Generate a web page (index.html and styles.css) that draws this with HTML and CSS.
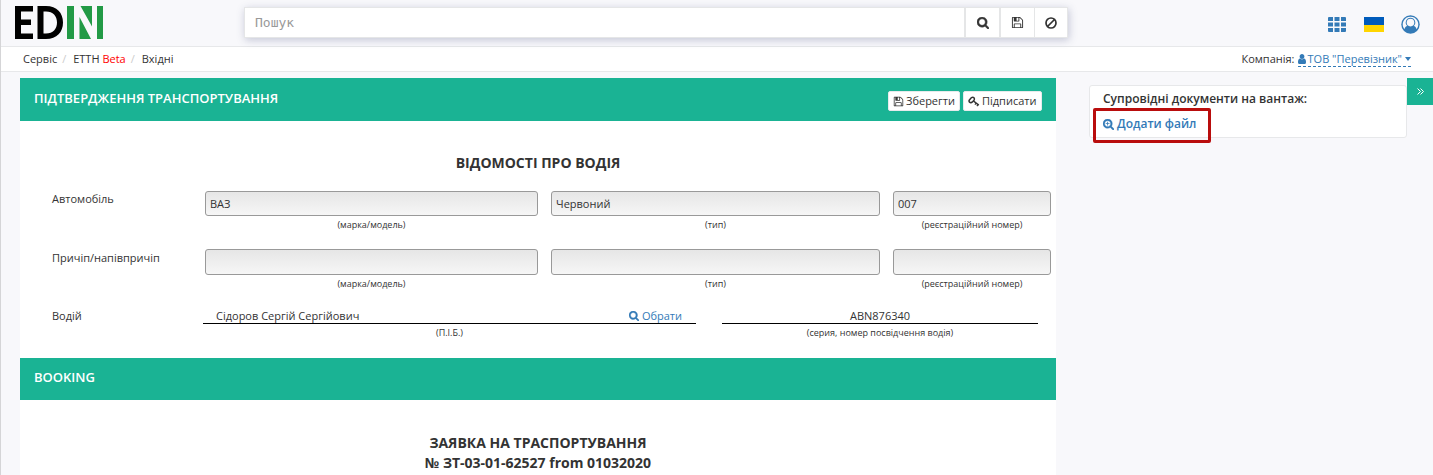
FILE: index.html
```html
<!DOCTYPE html>
<html lang="uk">
<head>
<meta charset="utf-8">
<title>EDIN</title>
<link rel="stylesheet" href="styles.css">
</head>
<body>
<svg class="defs" width="0" height="0" aria-hidden="true">
  <symbol id="search" viewBox="64 128 1664 1664"><path stroke="currentColor" stroke-width="70" d="M1216 832q0-185-131.5-316.5t-316.5-131.5-316.5 131.5-131.5 316.5 131.5 316.5 316.5 131.5 316.5-131.5 131.500-316.500zm512 832q0 52-38 90t-90 38q-54 0-90-38l-343-342q-179 124-399 124-143 0-273.500-55.500t-225-150-150-225-55.500-273.500 55.500-273.500 150-225 225-150 273.500-55.500 273.500 55.500 225 150 150 225 55.500 273.500q0 220-124 399l343 343q37 37 37 90z"/></symbol>
  <symbol id="zoom-in" viewBox="64 128 1664 1664"><path stroke="currentColor" stroke-width="50" d="M1216 832q0-185-131.5-316.5t-316.5-131.5-316.5 131.5-131.5 316.5 131.5 316.5 316.5 131.5 316.5-131.5 131.500-316.500zm512 832q0 52-38 90t-90 38q-54 0-90-38l-343-342q-179 124-399 124-143 0-273.500-55.500t-225-150-150-225-55.500-273.500 55.500-273.500 150-225 225-150 273.500-55.500 273.500 55.500 225 150 150 225 55.500 273.500q0 220-124 399l343 343q37 37 37 90z"/><path d="M704 544h128v224h224v128h-224v224h-128v-224h-224v-128h224z"/></symbol>
  <symbol id="save" viewBox="0 0 1792 1792"><path d="M512 1536h768v-384h-768v384zm896 0h128v-896q0-14-10-38.500t-20-34.500l-281-281q-10-10-34-20t-39-10v416q0 40-28 68t-68 28h-576q-40 0-68-28t-28-68v-416h-128v1280h128v-416q0-40 28-68t68-28h832q40 0 68 28t28 68v416zm-384-928v-320q0-13-9.500-22.500t-22.500-9.500h-192q-13 0-22.500 9.500t-9.500 22.500v320q0 13 9.500 22.500t22.500 9.500h192q13 0 22.500-9.500t9.500-22.500zm640 32v928q0 40-28 68t-68 28h-1344q-40 0-68-28t-28-68v-1344q0-40 28-68t68-28h928q40 0 88 20t76 48l280 280q28 28 48 76t20 88z"/></symbol>
  <symbol id="user" viewBox="0 0 1792 1792"><path d="M1536 1399q0 109-62.500 187t-150.500 78h-854q-88 0-150.500-78t-62.500-187q0-85 8.500-160.500t31.500-152 58.500-131 94-89 134.500-34.500q131 128 313 128t313-128q76 0 134.500 34.500t94 89 58.500 131 31.500 152 8.500 160.500zm-256-887q0 159-112.500 271.500t-271.500 112.500-271.500-112.500-112.500-271.500 112.500-271.500 271.500-112.500 271.500 112.500 112.500 271.500z"/></symbol>
</svg>

<header class="topbar">
  <svg class="logo" width="89" height="34" viewBox="0 0 89 34">
    <path d="M0 0H18V5.500H6V13.500H16V19H6V27.500H18V33H0Z"/>
    <path fill-rule="evenodd" d="M22.500 0H31C42 0 48 7 48 16.500S42 33 31 33H22.500ZM28.500 5.500V27.500H31C38 27.500 42 23 42 16.500S38 5.500 31 5.500Z"/>
    <path fill="#229a46" d="M52 0H59V33H52ZM65.500 0H77V20.500ZM64.500 11L76 33H64.500ZM82 0H88V33H82Z"/>
  </svg>
  <div class="searchbox">
    <div class="searchbox-input">Пошук</div>
    <div class="searchbox-btn"><svg width="12" height="12"><use href="#search"/></svg></div>
    <div class="searchbox-btn"><svg width="13" height="13"><use href="#save"/></svg></div>
    <div class="searchbox-btn last"><svg class="stroked" width="12" height="12" viewBox="0 0 12 12" stroke-width="1.700"><circle cx="6" cy="6" r="5"/><path d="M2.500 9.500L9.500 2.500"/></svg></div>
  </div>
  <nav class="tools">
    <svg width="19" height="15" viewBox="0 0 19 15"><path d="M0 1q0-1 1-1h4v4H0zM6.500 0h5v4h-5zM13 0h4q1 0 1 1v3h-5zM0 5.500h5v4H0zM6.500 5.500h5v4h-5zM13 5.500h5v4h-5zM0 11h5v4H1q-1 0-1-1zM6.500 11h5v4h-5zM13 11h5v3q0 1-1 1h-4z"/></svg>
    <span class="flag"></span>
    <svg width="19" height="19" viewBox="0 0 19 19"><circle cx="9.500" cy="9.500" r="9.200"/><path fill="#f8f8fb" d="M9.500 1.700A7.800 7.800 0 0 0 3.400 14.300C3.900 12.300 4.900 11.300 6.200 11.100A4.900 4.900 0 0 1 9.500 2.700A4.900 4.900 0 0 1 12.800 11.100C14.100 11.300 15.100 12.300 15.600 14.300A7.800 7.800 0 0 0 9.500 1.700Z"/><circle cx="9.500" cy="7.600" r="3.800" fill="#f8f8fb"/></svg>
  </nav>
</header>

<div class="crumbs">
  <div class="trail"><span>Сервіс</span><i>/</i><span>ЕТТН <b>Beta</b></span><i>/</i><span>Вхідні</span></div>
  <div class="company">Компанія: <a class="company-link"><svg width="8" height="10" viewBox="256 128 1280 1536" preserveAspectRatio="none"><use href="#user" width="1792" height="1792"/></svg><span>ТОВ "Перевізник"</span><em class="caret"></em></a></div>
</div>

<main class="page">
  <section class="panel">
    <div class="panel-head">
      <h2>ПІДТВЕРДЖЕННЯ ТРАНСПОРТУВАННЯ</h2>
      <div class="actions">
        <button class="btn save"><svg width="11" height="11"><use href="#save"/></svg>Зберегти</button>
        <button class="btn sign"><svg class="stroked" width="12" height="11" viewBox="0 0 12 11"><path stroke-width="1.500" d="M1.500 6.200Q.6 5.200 1.400 4L3.500 1.600Q5 .7 5.900 1.800T6 4.200L4.400 5.900Q3 7.200 1.500 6.200Z"/><path stroke-width="1.500" d="M5.500 5L10.800 9.200"/><path stroke-width="1.200" d="M8.200 7.200L6.900 8.700M10 8.700L8.900 10.200"/></svg>Підписати</button>
      </div>
    </div>
    <h3 class="title">ВІДОМОСТІ ПРО ВОДІЯ</h3>
    <div class="row">
      <label>Автомобіль</label>
      <div class="field"><div class="input">ВАЗ</div><small>(марка/модель)</small></div>
      <div class="field"><div class="input">Червоний</div><small>(тип)</small></div>
      <div class="field"><div class="input">007</div><small>(реєстраційний номер)</small></div>
    </div>
    <div class="row second">
      <label>Причіп/напівпричіп</label>
      <div class="field"><div class="input"></div><small>(марка/модель)</small></div>
      <div class="field"><div class="input"></div><small>(тип)</small></div>
      <div class="field"><div class="input"></div><small>(реєстраційний номер)</small></div>
    </div>
    <div class="driver">
      <label>Водій</label>
      <div class="field"><div class="line name"><span>Сідоров Сергій Сергійович</span><a><svg width="10" height="10"><use href="#search"/></svg>Обрати</a></div><small>(П.І.Б.)</small></div>
      <div class="field"><div class="line licence">ABN876340</div><small>(серия, номер посвідчення водія)</small></div>
    </div>
    <div class="panel-head booking"><h2>BOOKING</h2></div>
    <h3 class="title order">ЗАЯВКА НА ТРАСПОРТУВАННЯ<br>№ ЗТ-03-01-62527 from 01032020</h3>
  </section>
  <aside class="side">
    <div class="card">
      <h4>Супровідні документи на вантаж:</h4>
      <a class="add"><svg width="11" height="11"><use href="#zoom-in"/></svg>Додати файл</a>
      <div class="highlight"></div>
    </div>
    <div class="toggle"><svg class="stroked" width="7" height="7" viewBox="0 0 7 7"><path d="M.5 .5L3.500 3.500L.5 6.500M3.500 .5L6.500 3.500L3.500 6.500"/></svg></div>
  </aside>
</main>
</body>
</html>
```
FILE: styles.css
```css
* { box-sizing: border-box; }
html, body { height: 100%; }
body {
  margin: 0;
  overflow: hidden;
  border-left: 1px solid #d5d5d7;
  background: #f8f8fb;
  color: #333;
  font: 11px/16px "Open Sans", "Noto Sans", sans-serif;
}
svg { display: block; flex: none; fill: currentColor; }
.stroked { fill: none; stroke: currentColor; }
.defs { position: absolute; }
h2, h3, h4 { margin: 0; }
a { color: #337ab7; }

.topbar { display: flex; height: 47px; border-bottom: 1px solid #e7e8ea; }
.logo { margin: 6px 0 0 14px; color: #000; }
.searchbox {
  display: flex;
  width: 824px;
  height: 31px;
  margin: 7px 0 0 140px;
  border: 1px solid #e5e6e7;
  background: #fff;
  box-shadow: 1px 2px 8px rgba(60, 70, 120, .28);
}
.searchbox-input {
  flex: 1;
  padding-left: 10px;
  color: #999;
  font: 13px/29px "DejaVu Sans Mono", monospace;
}
.searchbox-btn {
  display: flex;
  width: 35px;
  align-items: center;
  justify-content: center;
  border-left: 2px solid #e5e6e7;
}
.searchbox-btn.last { width: 33px; border-left-width: 1px; }
.tools { display: flex; align-items: center; margin: 2px 13px 0 auto; color: #337ab7; }
.flag { width: 20px; height: 15px; margin: 0 17px; background: linear-gradient(#005bbb 50%, #ffd500 50%); }

.crumbs { display: flex; height: 25px; padding: 4px 22px 0; justify-content: space-between; border-bottom: 1px solid #e7e8ea; background: #fff; }
.trail { display: flex; }
.trail i { width: 16px; padding-left: 5px; color: #ccc; font-style: normal; }
.trail b { color: #f00; font-weight: 400; }
.company { display: flex; gap: 3px; }
.company-link { display: flex; height: 16px; align-items: center; border-bottom: 1px dashed #337ab7; }
.company-link svg { margin-right: 2px; }
.caret { margin-left: 3px; border: 3.5px solid transparent; border-width: 4px 3.5px 0; border-top-color: #337ab7; }

.page { display: flex; padding: 6px 0 0 19px; }
.panel { width: 1036px; height: 397px; background: #fff; }
.panel-head { display: flex; height: 43px; padding: 0 14px; justify-content: space-between; background: #1ab394; }
.panel-head h2 { color: #fff; font-size: 13px; font-weight: 600; line-height: 40px; }
.actions { display: flex; gap: 3px; padding-top: 13px; }
.btn {
  display: flex;
  height: 20px;
  padding: 0 4px;
  align-items: center;
  gap: 2px;
  border: 1px solid #e7eaec;
  border-radius: 2px;
  background: #fff;
  color: #333;
  font: 11px/18px "Open Sans", "Noto Sans", sans-serif;
}
.btn.save { width: 72px; }
.btn.sign { width: 79px; }
.title { padding-top: 32px; font-size: 14px; font-weight: 700; line-height: 20px; text-align: center; }
.row { display: grid; grid-template-columns: 153px 333px 329px 158px; column-gap: 13px; height: 58px; margin-top: 18px; padding-left: 19px; }
.row label { padding-left: 13px; }
.row.second { height: 59px; margin-top: 0; }
.row.second label { padding-top: 1px; }
.input { height: 25px; padding: 0 4px; border: 1px solid #999; border-radius: 3px; background: linear-gradient(#e6e6e6, #f6f6f6); line-height: 24px; }
.row.second .input { height: 26px; }
small { display: block; padding-top: 1px; font-size: 9px; line-height: 16px; text-align: center; }
.driver { display: grid; grid-template-columns: 151px 493px 26px 316px; height: 50px; padding-left: 32px; }
.driver .field:last-child { grid-column: 4; }
.line { display: flex; height: 16px; line-height: 15px; border-bottom: 1px solid #000; }
.line.name { padding: 0 14px 0 13px; justify-content: space-between; }
.line a { display: flex; align-items: center; gap: 3px; }
.line.licence { justify-content: center; }
.booking { height: 42px; }
.booking h2 { line-height: 39px; }
.title.order { padding-top: 33px; }

.side { display: flex; flex: 1; padding-left: 33px; }
.card { position: relative; width: 318px; height: 53px; margin-top: 7px; padding: 5px 13px; border: 1px solid #e7e8ea; border-radius: 3px; background: #fff; font-size: 12px; font-weight: 600; }
.card h4 { font-size: 12px; font-weight: 600; }
.add { display: flex; align-items: center; gap: 3px; margin-top: 9px; }
.highlight { position: absolute; top: 22px; left: 3px; width: 118px; height: 35px; border: 3px solid #b90d0d; border-radius: 2px; }
.toggle { display: flex; flex: 1; height: 27px; align-items: center; justify-content: center; background: #1ab394; color: #fff; }
```
